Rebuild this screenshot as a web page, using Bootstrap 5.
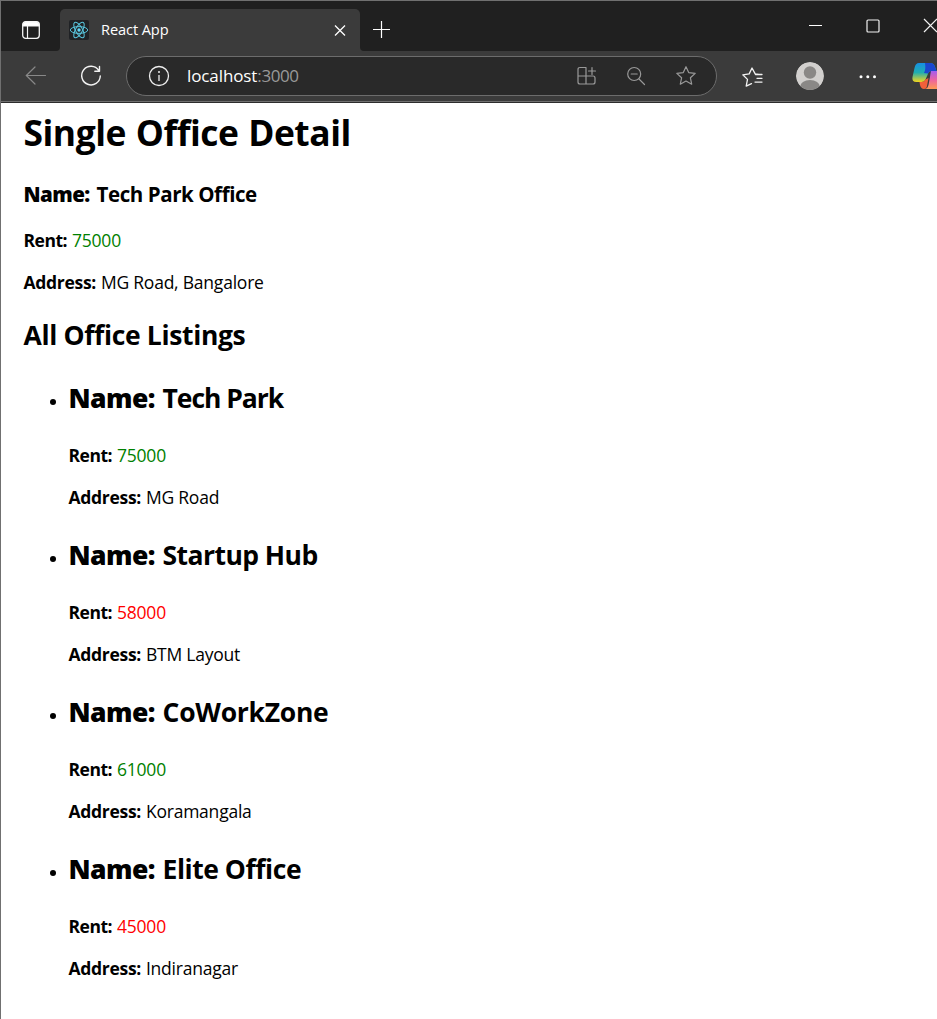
<!DOCTYPE html>
<html lang="en">
<head>
<meta charset="utf-8">
<title>React App</title>
<link href="https://cdn.jsdelivr.net/npm/bootstrap@5.3.0/dist/css/bootstrap.min.css" rel="stylesheet">
<style>
body{font-family:"Open Sans","Noto Sans",sans-serif;background:#fff;color:#000;overflow:hidden}
.window{height:1019px;border-left:1px solid #707070;border-top:1px solid #707070}
svg{display:block;flex:none}
.strip{height:50px;background:#202020;color:#fff}
.side-btn{width:59px;border-bottom-right-radius:4px;padding:20px 0 0 21px;background:#202020}
.under{background:#3b3b3b}
.tab{width:300px;height:42px;margin-top:8px;background:#3b3b3b;border-radius:5px 5px 0 0;padding:0 14px 0 9px}
.tab-title{font-size:14.6px;line-height:20px;margin:0 0 2px 12px;letter-spacing:-.1px}
.rest{border-bottom-left-radius:4px;background:#202020}
.tools{height:50px;background:#3b3b3b;color:#f2f2f2}
.edge{height:2px;background:#2d2d2d;border-top:1px solid #707070}
.address{width:591px;height:40px;margin-left:24px;border:1px solid #6c6c6c;border-radius:20px;background:#292929;padding:0 20px 0 21px}
.url{font-size:17px;color:#fff;margin-left:17px;line-height:24px;letter-spacing:-.1px}
.port{color:#999;letter-spacing:-.4px}
.page{padding:5px 0 0 22.5px}
.page h1,.page h2,.page h3,.page p{color:#000;white-space:nowrap}
.page h1{font-size:35.4px;line-height:48px;font-weight:700;letter-spacing:-.46px;word-spacing:1px;margin:0 0 24px}
.page h3{font-size:20.5px;line-height:28px;font-weight:700;letter-spacing:-.42px;margin:0 0 20px}
.page h2{font-size:26.5px;line-height:36px;font-weight:700;letter-spacing:-.3px;margin:0 0 27px}
.page h2.section{margin:23px 0 27px;letter-spacing:-.35px}
.page p{font-size:17.5px;line-height:24px;letter-spacing:-.22px;margin:0 0 18px}
.page strong{flex:none;font-weight:700}
h3 strong{width:73px}
h2 strong{width:94px}
.page h2 strong,.page h3 strong{font-weight:800;letter-spacing:-.55px}
.rent strong{width:48.5px;letter-spacing:-.5px}
.addr strong{width:77.4px;letter-spacing:-.3px}
.offices{padding-left:45px}
.offices li{position:relative;height:157px}
.offices li::before{content:"";position:absolute;left:-19px;top:19px;width:6px;height:6px;border-radius:50%;background:#000}
.high{color:green}
.low{color:red}
.t9{letter-spacing:-1.05px}.t11{letter-spacing:-.55px}.t10{letter-spacing:-.26px}.t12{letter-spacing:-.45px}
</style>
<script src="https://cdn.jsdelivr.net/npm/bootstrap@5.3.0/dist/js/bootstrap.bundle.min.js"></script>
</head>
<body>
<div class="window">
  <header>
    <div class="strip d-flex">
      <div class="under"><div class="side-btn h-100">
        <svg width="18" height="18" viewBox="0 0 18 18" fill="none" stroke="#f5f5f5"><rect x=".7" y=".7" width="16.6" height="16.6" rx="3" stroke-width="1.3"/><path d="M1 3.2Q1 1 3.5 1h11Q17 1 17 3.2V5H1z" fill="#fff"/><path d="M5.5 5v12" stroke-width="1.2"/></svg>
      </div></div>
      <div class="tab d-flex align-items-center">
        <svg width="20" height="20" viewBox="0 0 20 20"><rect width="20" height="20" rx="2" fill="#202225"/><g fill="none" stroke="#58c4dc" stroke-width="1"><ellipse cx="10" cy="10" rx="8.7" ry="3.4"/><ellipse cx="10" cy="10" rx="8.7" ry="3.4" transform="rotate(60 10 10)"/><ellipse cx="10" cy="10" rx="8.7" ry="3.4" transform="rotate(120 10 10)"/></g><circle cx="10" cy="10" r="1.7" fill="#61dafb"/></svg>
        <span class="tab-title">React App</span>
        <svg class="ms-auto" width="12" height="12" viewBox="0 0 12 12" stroke="#fff" stroke-width="1.3"><path d="M1 1.500l10 10M11 1.500L1 11.500"/></svg>
      </div>
      <div class="under flex-grow-1"><div class="rest h-100 d-flex">
        <svg class="ms-2 mt-3" width="28" height="26" viewBox="0 0 28 26" stroke="#fff" stroke-width="1.2"><path d="M5 12.500h17M13.500 4v17"/></svg>
        <svg class="ms-auto" width="130" height="50" viewBox="0 0 130 50" fill="none" stroke="#f2f2f2"><path d="M2 24.500h13" stroke="#fff"/><rect x="60" y="19" width="12" height="12" rx="1" stroke-width="1.200"/><path d="M117 18l13 13M130 18l-13 13" stroke-width="1.200"/></svg>
      </div></div>
    </div>
    <div class="tools d-flex align-items-center">
      <svg width="101" height="50" viewBox="0 0 101 50" fill="none" stroke-linecap="round"><path d="M44.500 24.500h-19M34 16l-8.700 8.500L34 33" stroke="#898989" stroke-width="1.200"/><path d="M97.800 19.500A9.300 9.300 0 1 0 99.300 25M98.500 15.500v4.700h-4.700" stroke="#f2f2f2" stroke-width="1.400" stroke-linejoin="round"/></svg>
      <div class="address d-flex align-items-center">
        <svg width="22" height="22" viewBox="0 0 22 22" fill="none" stroke="#eee"><circle cx="11" cy="11" r="9.500" stroke-width="1.300"/><path d="M11 10v6" stroke-width="1.300"/><circle cx="11" cy="7" r="1" fill="#eee" stroke="none"/></svg>
        <span class="url">localhost<span class="port">:3000</span></span>
        <svg class="ms-auto" width="120" height="22" viewBox="0 0 120 22" fill="none" stroke="#999" stroke-width="1.200" stroke-linejoin="round" stroke-linecap="round"><path d="M10 2.500H4q-2 0-2 2V17q0 2 2 2h13q2 0 2-2v-4q0-2-2-2H2M10 2.500V19M16 2.500v7M12.500 6h7"/><circle cx="58.200" cy="9" r="6.500"/><path d="M55.200 9h6M63 14l5.500 5.500"/><path d="M110 1.700l2.700 5.900 6.500.8-4.800 4.400 1.300 6.400-5.700-3.200-5.700 3.200 1.300-6.400-4.800-4.400 6.500-.8z"/></svg>
      </div>
      <svg class="ms-auto" width="220" height="50" viewBox="0 0 220 50" fill="none">
        <defs>
          <linearGradient id="ribbonA" x1="0" y1="0" x2="0" y2="1"><stop offset="0" stop-color="#168fe5"/><stop offset=".5" stop-color="#20aeb0"/><stop offset="1" stop-color="#f3d51d"/></linearGradient>
          <linearGradient id="ribbonB" x1="0" y1="0" x2="0" y2="1"><stop offset="0" stop-color="#a45cf0"/><stop offset=".5" stop-color="#ed63a0"/><stop offset="1" stop-color="#ff9a52"/></linearGradient>
          <clipPath id="avatar"><circle cx="93" cy="25" r="14"/></clipPath>
        </defs>
        <path d="M42 23.500l-3.800-.6L35 17l-2.800 5.900-6.400.9 4.700 4.600-1.300 6.700 5.300-2.500M38.500 23.500H45M40 27.300h5M38 31.100h7" stroke="#f2f2f2" stroke-width="1.300" stroke-linecap="round" stroke-linejoin="round"/>
        <g clip-path="url(#avatar)"><circle cx="93" cy="25" r="14" fill="#d2d0ce"/><circle cx="93" cy="21.500" r="6.200" fill="#8a8886"/><ellipse cx="93" cy="36" rx="10" ry="7" fill="#8a8886"/></g>
        <g fill="#fff"><circle cx="144" cy="25.800" r="1.500"/><circle cx="150.800" cy="25.800" r="1.500"/><circle cx="157.500" cy="25.800" r="1.500"/></g>
        <path d="M202 12h11q4 0 5 4l1.500 4h-5q-3 0-4 4l-2 4.500q-1 2.500-4 2.500h-5q-5 0-4-5l2-9q1-5 4.500-5z" fill="url(#ribbonA)"/>
        <path d="M208 12h5q4 0 5 4l1.500 4h-5q-2.500 0-3.500 2.500L207 22q2-4 1-10z" fill="#1b46cf"/>
        <path d="M214 20h8v18h-14q3-1 3.500-4l1.500-8q.5-4 1-6z" fill="url(#ribbonB)"/>
        <path d="M202.500 31h2q3 0 4-2.500l3-1.500-1.500 8q-.5 3-3 3-3 0-4-4z" fill="#f2603a"/>
      </svg>
    </div>
    <div class="edge"></div>
  </header>
  <main class="page">
    <h1>Single Office Detail</h1>
    <h3 class="d-flex"><strong>Name:</strong><span>Tech Park Office</span></h3>
    <p class="rent d-flex"><strong>Rent:</strong><span class="high">75000</span></p>
    <p class="addr d-flex"><strong>Address:</strong><span>MG Road, Bangalore</span></p>
    <h2 class="section">All Office Listings</h2>
    <ul class="offices list-unstyled">
      <li><h2 class="d-flex"><strong>Name:</strong><span class="t9">Tech Park</span></h2><p class="rent d-flex"><strong>Rent:</strong><span class="high">75000</span></p><p class="addr d-flex"><strong>Address:</strong><span>MG Road</span></p></li>
      <li><h2 class="d-flex"><strong>Name:</strong><span class="t11">Startup Hub</span></h2><p class="rent d-flex"><strong>Rent:</strong><span class="low">58000</span></p><p class="addr d-flex"><strong>Address:</strong><span>BTM Layout</span></p></li>
      <li><h2 class="d-flex"><strong>Name:</strong><span class="t10">CoWorkZone</span></h2><p class="rent d-flex"><strong>Rent:</strong><span class="high">61000</span></p><p class="addr d-flex"><strong>Address:</strong><span>Koramangala</span></p></li>
      <li><h2 class="d-flex"><strong>Name:</strong><span class="t12">Elite Office</span></h2><p class="rent d-flex"><strong>Rent:</strong><span class="low">45000</span></p><p class="addr d-flex"><strong>Address:</strong><span>Indiranagar</span></p></li>
    </ul>
  </main>
</div>
</body>
</html>
